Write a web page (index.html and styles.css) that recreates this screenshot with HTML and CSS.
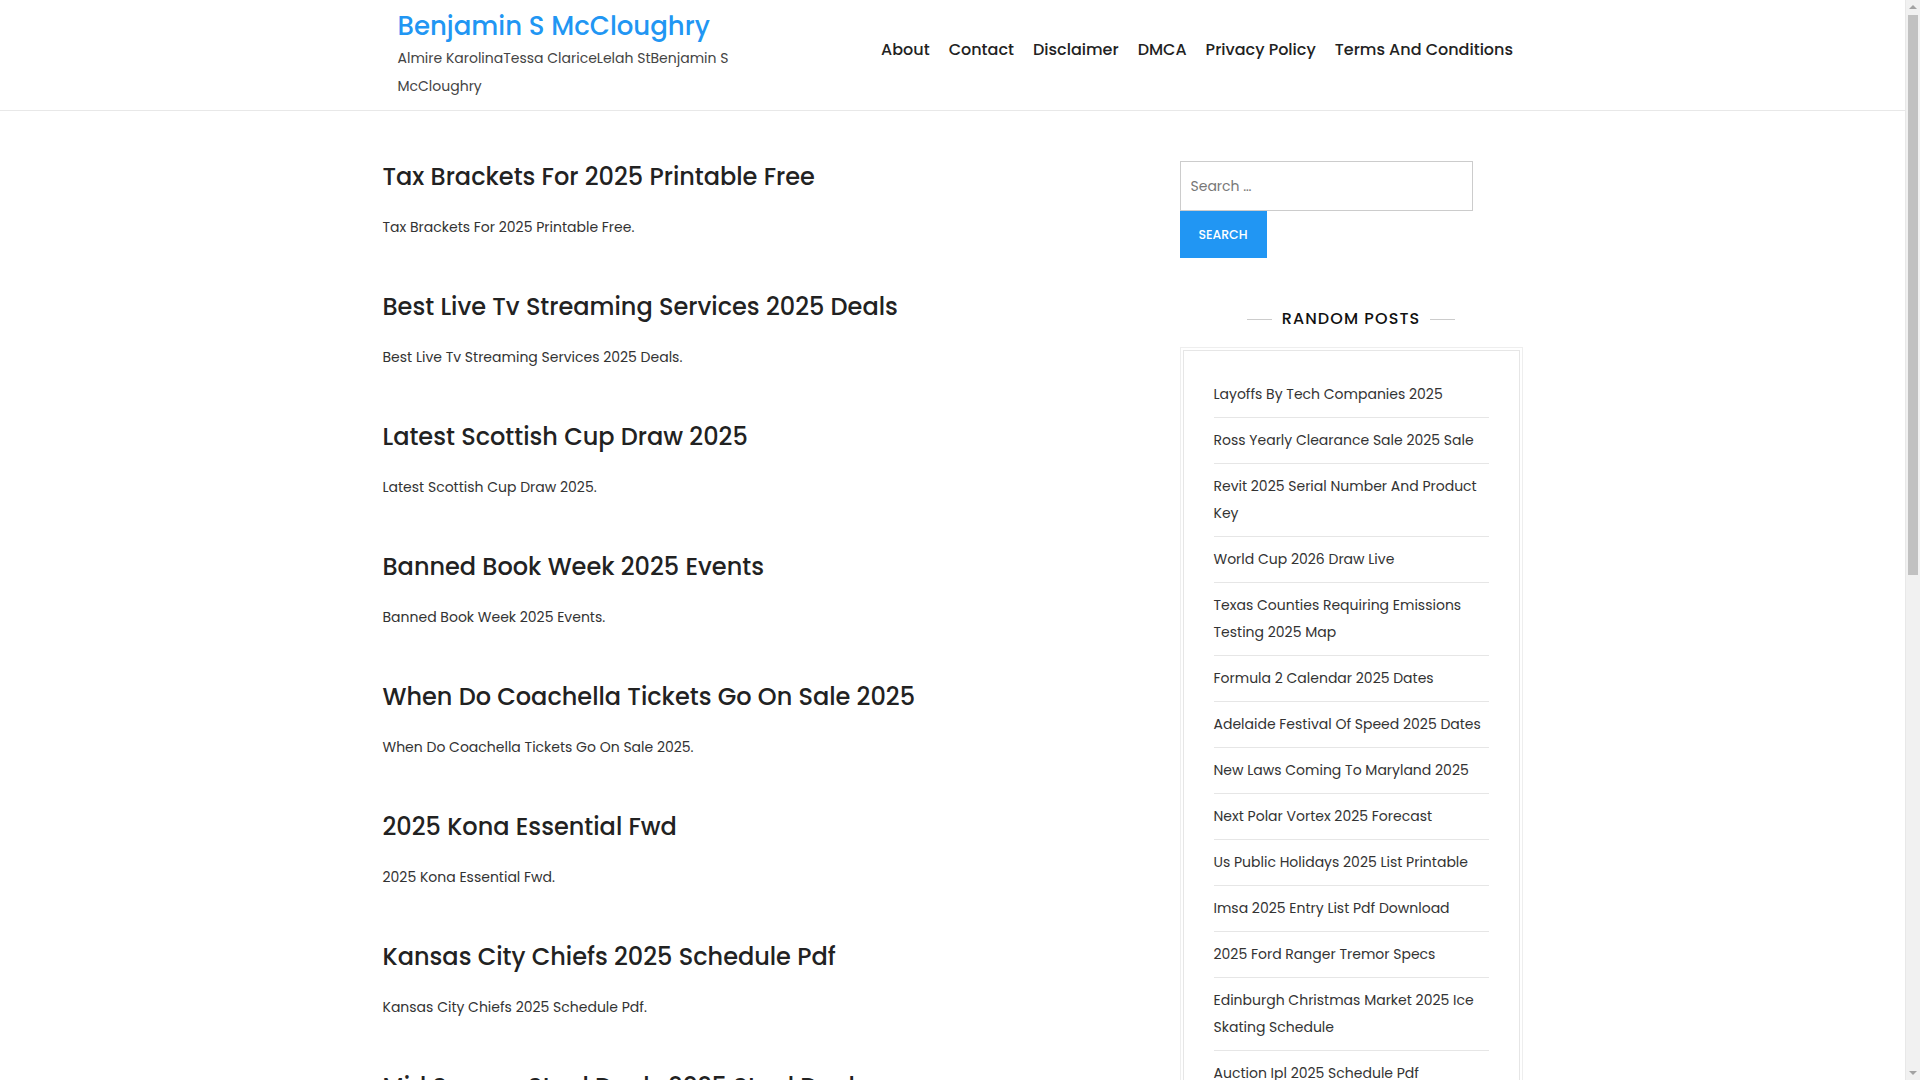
FILE: index.html
```html
<!DOCTYPE html>
<html lang="en">
<head>
<meta charset="utf-8">
<title>Benjamin S McCloughry</title>
<link rel="stylesheet" href="styles.css">
</head>
<body>
<div class="page">
<header class="site-header">
  <div class="container header-inner">
    <div class="branding">
      <a class="site-title" href="#">Benjamin S McCloughry</a>
      <p class="site-desc">Almire KarolinaTessa ClariceLelah StBenjamin S McCloughry</p>
    </div>
    <nav class="main-nav">
      <ul>
        <li><a href="#">About</a></li>
        <li><a href="#">Contact</a></li>
        <li><a href="#">Disclaimer</a></li>
        <li><a href="#">DMCA</a></li>
        <li><a href="#">Privacy Policy</a></li>
        <li><a href="#">Terms And Conditions</a></li>
      </ul>
    </nav>
  </div>
</header>

<div class="container content">
  <main class="posts">
    <article class="post">
      <h2 class="post-title"><a href="#">Tax Brackets For 2025 Printable Free</a></h2>
      <p class="excerpt">Tax Brackets For 2025 Printable Free.</p>
    </article>
    <article class="post">
      <h2 class="post-title"><a href="#">Best Live Tv Streaming Services 2025 Deals</a></h2>
      <p class="excerpt">Best Live Tv Streaming Services 2025 Deals.</p>
    </article>
    <article class="post">
      <h2 class="post-title"><a href="#">Latest Scottish Cup Draw 2025</a></h2>
      <p class="excerpt">Latest Scottish Cup Draw 2025.</p>
    </article>
    <article class="post">
      <h2 class="post-title"><a href="#">Banned Book Week 2025 Events</a></h2>
      <p class="excerpt">Banned Book Week 2025 Events.</p>
    </article>
    <article class="post">
      <h2 class="post-title"><a href="#">When Do Coachella Tickets Go On Sale 2025</a></h2>
      <p class="excerpt">When Do Coachella Tickets Go On Sale 2025.</p>
    </article>
    <article class="post">
      <h2 class="post-title"><a href="#">2025 Kona Essential Fwd</a></h2>
      <p class="excerpt">2025 Kona Essential Fwd.</p>
    </article>
    <article class="post">
      <h2 class="post-title"><a href="#">Kansas City Chiefs 2025 Schedule Pdf</a></h2>
      <p class="excerpt">Kansas City Chiefs 2025 Schedule Pdf.</p>
    </article>
    <article class="post">
      <h2 class="post-title"><a href="#">Mid Season Steal Deals 2025 Steal Deals</a></h2>
      <p class="excerpt">Mid Season Steal Deals 2025 Steal Deals.</p>
    </article>
    <article class="post">
      <h2 class="post-title"><a href="#">Nfl Draft 2025 Order Of Picks</a></h2>
      <p class="excerpt">Nfl Draft 2025 Order Of Picks.</p>
    </article>
  </main>

  <aside class="sidebar">
    <form class="search-form">
      <input class="search-field" type="search" placeholder="Search …">
      <button class="search-submit" type="button">Search</button>
    </form>

    <section class="widget">
      <h3 class="widget-title"><span>Random Posts</span></h3>
      <div class="widget-box">
        <ul class="widget-list">
          <li><a href="#">Layoffs By Tech Companies 2025</a></li>
          <li><a href="#">Ross Yearly Clearance Sale 2025 Sale</a></li>
          <li><a href="#">Revit 2025 Serial Number And Product Key</a></li>
          <li><a href="#">World Cup 2026 Draw Live</a></li>
          <li><a href="#">Texas Counties Requiring Emissions Testing 2025 Map</a></li>
          <li><a href="#">Formula 2 Calendar 2025 Dates</a></li>
          <li><a href="#">Adelaide Festival Of Speed 2025 Dates</a></li>
          <li><a href="#">New Laws Coming To Maryland 2025</a></li>
          <li><a href="#">Next Polar Vortex 2025 Forecast</a></li>
          <li><a href="#">Us Public Holidays 2025 List Printable</a></li>
          <li><a href="#">Imsa 2025 Entry List Pdf Download</a></li>
          <li><a href="#">2025 Ford Ranger Tremor Specs</a></li>
          <li><a href="#">Edinburgh Christmas Market 2025 Ice Skating Schedule</a></li>
          <li><a href="#">Auction Ipl 2025 Schedule Pdf</a></li>
          <li><a href="#">Best Family Suv 2025 Uk</a></li>
        </ul>
      </div>
    </section>
  </aside>
</div>
</div>

<div class="fake-scrollbar" aria-hidden="true">
  <span class="sb-arrow sb-up"></span>
  <span class="sb-thumb"></span>
  <span class="sb-arrow sb-down"></span>
</div>
</body>
</html>
```

FILE: styles.css
```css
* { box-sizing: border-box; }

html, body {
  margin: 0;
  padding: 0;
}

body {
  font-family: "Poppins", "Open Sans", "DejaVu Sans", sans-serif;
  color: #333;
  background: #fff;
  font-size: 14px;
  line-height: 28px;
}

.page {
  margin-right: 15px;
}

a { text-decoration: none; color: inherit; }

.container {
  max-width: 1170px;
  margin: 0 auto;
  padding: 0 15px;
}

/* Header */
.site-header {
  border-bottom: 1px solid #e8e8e8;
}

.header-inner {
  display: flex;
  justify-content: space-between;
  align-items: flex-start;
  height: 110px;
}

.branding {
  padding: 8px 0 0 15px;
  width: 360px;
}

.site-title {
  display: block;
  color: #2196f3;
  font-size: 26px;
  font-weight: 500;
  line-height: 36px;
}

.site-desc {
  margin: 0;
  font-size: 14px;
  line-height: 28px;
  color: #444;
}

.main-nav ul {
  list-style: none;
  margin: 0;
  padding: 36px 0 0;
  display: flex;
}

.main-nav li a {
  display: block;
  padding: 0 9.5px;
  font-size: 16px;
  font-weight: 500;
  line-height: 28px;
  color: #222;
}

/* Content */
.content {
  display: grid;
  grid-template-columns: 1fr 343px;
  column-gap: 55px;
  padding-top: 49px;
}

.post {
  margin-bottom: 48px;
}

.post-title {
  margin: 0;
  font-size: 24px;
  font-weight: 500;
  line-height: 34px;
  color: #222;
}

.excerpt {
  margin: 19px 0 0;
  padding-bottom: 1px;
  font-size: 14px;
  line-height: 28px;
  color: #333;
}

/* Sidebar */
.search-form {
  display: flex;
  flex-direction: column;
  align-items: flex-start;
  padding-top: 1px;
}

.search-field {
  width: 293px;
  height: 50px;
  border: 1px solid #ccc;
  padding: 0 10px;
  font-family: inherit;
  font-size: 14px;
  color: #333;
  outline: none;
}

.search-field::placeholder { color: #777; }

.search-submit {
  width: 87px;
  height: 47px;
  border: 0;
  background: #2196f3;
  color: #fff;
  font-family: inherit;
  font-size: 12.5px;
  font-weight: 500;
  text-transform: uppercase;
  cursor: pointer;
}

.widget {
  margin-top: 50px;
}

.widget-title {
  margin: 0 0 17px;
  display: flex;
  align-items: center;
  justify-content: center;
  gap: 10px;
  font-size: 16px;
  font-weight: 500;
  line-height: 22px;
  letter-spacing: 1.1px;
  text-transform: uppercase;
  color: #111;
}

.widget-title::before,
.widget-title::after {
  content: "";
  width: 25px;
  height: 1px;
  background: #ccc;
}

.widget-box {
  border: 1px solid #eee;
  padding: 2px;
}

.widget-list {
  list-style: none;
  margin: 0;
  padding: 21px 30px 0;
  border: 1px solid #e6e6e6;
}

.widget-list li {
  padding: 9px 0;
  border-bottom: 1px solid #e6e6e6;
  font-size: 14px;
  line-height: 27px;
  color: #333;
}

/* Simulated browser scrollbar (overlay on the right edge) */
.fake-scrollbar {
  position: fixed;
  top: 0;
  right: 0;
  width: 15px;
  height: 100vh;
  background: #f1f1f1;
  border-left: 1px solid #e8e8e8;
}

.sb-thumb {
  position: absolute;
  top: 15px;
  left: 2px;
  width: 10px;
  height: 560px;
  background: #c1c1c1;
}

.sb-arrow {
  position: absolute;
  left: 3px;
  width: 0;
  height: 0;
  border-left: 4px solid transparent;
  border-right: 4px solid transparent;
}

.sb-up {
  top: 5px;
  border-bottom: 4px solid #a3a3a3;
}

.sb-down {
  bottom: 5px;
  border-top: 4px solid #a3a3a3;
}
```
